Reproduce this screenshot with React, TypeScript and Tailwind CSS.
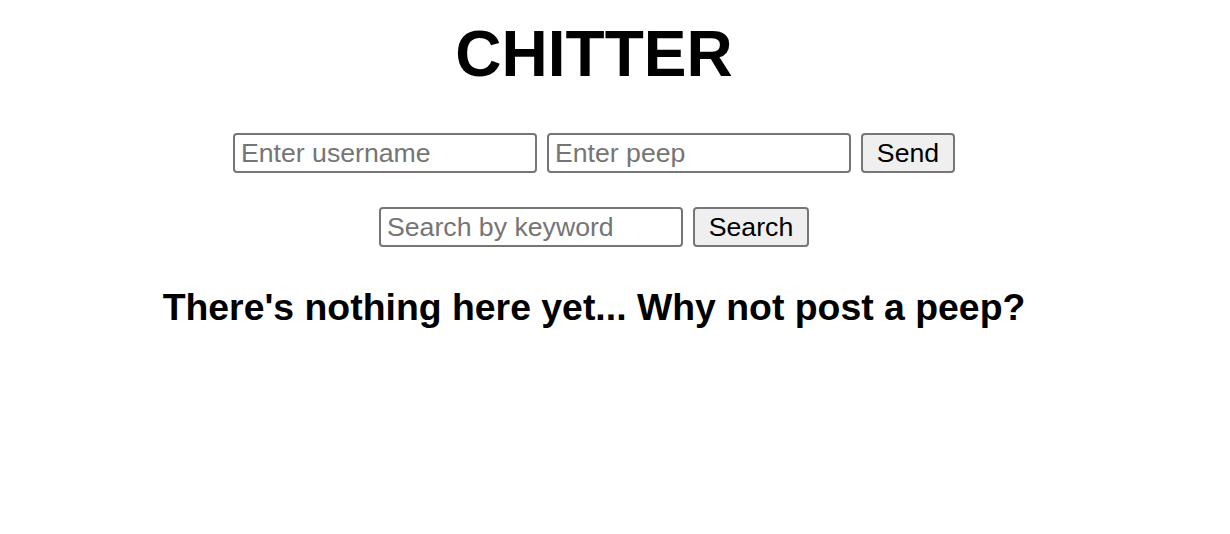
export default function App() {
  return (
    <div className="h-[534px] w-[1188px] bg-white font-['Liberation_Sans',Arial,sans-serif] text-black">
      <div className="flex flex-col items-center">
        <h1 className="pt-[22px] text-[64px] font-bold leading-[64px]">CHITTER</h1>

        <form className="mt-[47px] flex gap-[10px]" onSubmit={(e) => e.preventDefault()}>
          <input
            className="h-10 w-[304px] rounded-[4px] border-2 border-[#767676] px-[6px] text-[26.67px] placeholder:text-[#757575] focus:outline-none"
            placeholder="Enter username"
          />
          <input
            className="h-10 w-[304px] rounded-[4px] border-2 border-[#767676] px-[6px] text-[26.67px] placeholder:text-[#757575] focus:outline-none"
            placeholder="Enter peep"
          />
          <button className="h-10 w-[94px] rounded-[4px] border-2 border-[#767676] bg-[#efefef] text-[26.67px] leading-none">
            Send
          </button>
        </form>

        <form className="mt-[34px] flex gap-[10px]" onSubmit={(e) => e.preventDefault()}>
          <input
            className="h-10 w-[304px] rounded-[4px] border-2 border-[#767676] px-[6px] text-[26.67px] placeholder:text-[#757575] focus:outline-none"
            placeholder="Search by keyword"
          />
          <button className="h-10 w-[116px] rounded-[4px] border-2 border-[#767676] bg-[#efefef] text-[26.67px] leading-none">
            Search
          </button>
        </form>

        <h3 className="mt-[38px] text-[37.4px] font-bold leading-[44px]">
          There's nothing here yet... Why not post a peep?
        </h3>
      </div>
    </div>
  );
}
